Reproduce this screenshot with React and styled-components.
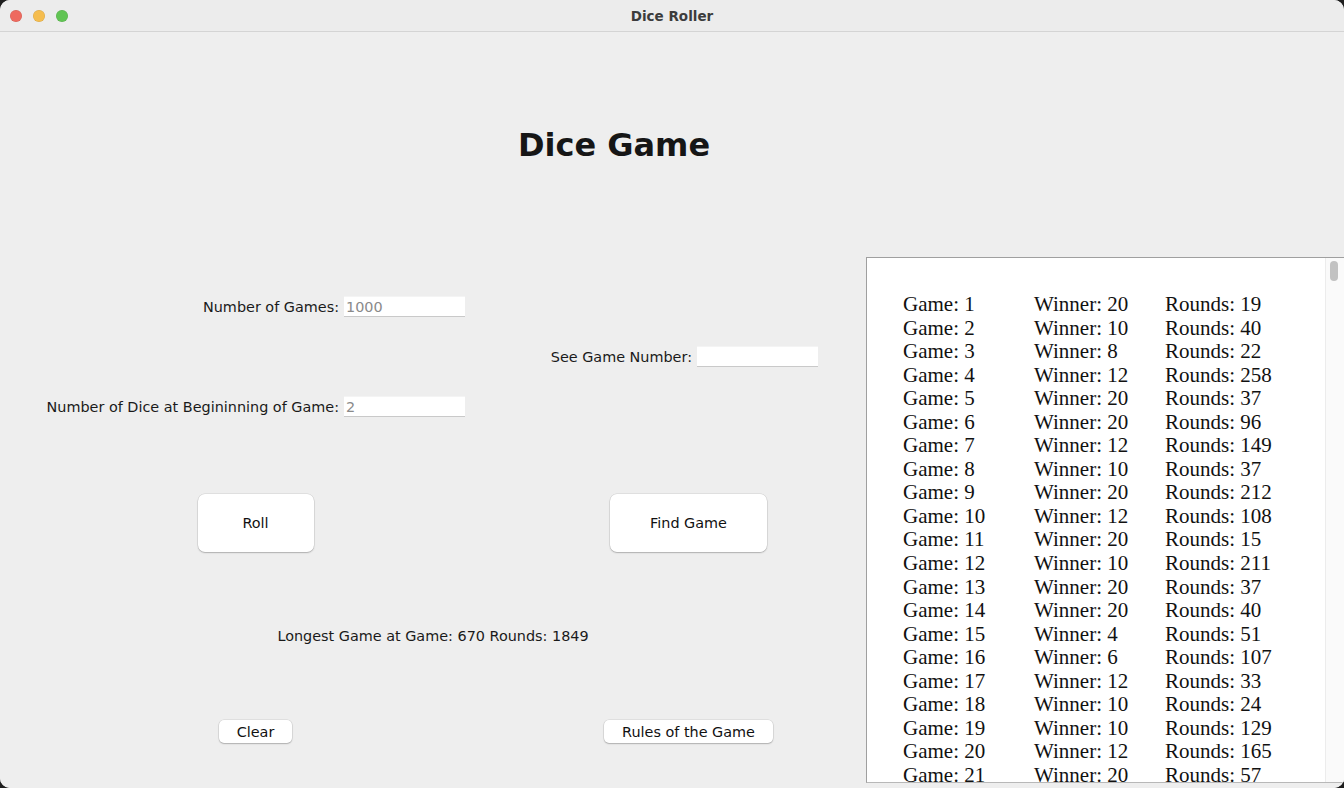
import React from "react";
import styled, { createGlobalStyle } from "styled-components";

const Global = createGlobalStyle`
  html, body { margin: 0; padding: 0; background: #1e1e1e; }
  body { width: 1344px; height: 788px; overflow: hidden; }
  * { box-sizing: border-box; }
`;

const Window = styled.div`
  width: 1344px;
  height: 788px;
  display: flex;
  flex-direction: column;
  background: #ececec;
  border-radius: 10px;
  overflow: hidden;
  font-family: "DejaVu Sans", "Liberation Sans", sans-serif;
  color: #1a1a1a;
`;

const TitleBar = styled.div`
  height: 32px;
  flex: none;
  display: flex;
  align-items: center;
  position: relative;
  background: #ececec;
  border-bottom: 1px solid #d4d4d4;
  padding-left: 10px;
  gap: 11px;
`;

const Light = styled.span`
  width: 12px;
  height: 12px;
  border-radius: 50%;
  background: ${(p) => p.$c};
  box-shadow: inset 0 0 0 0.5px rgba(0, 0, 0, 0.12);
`;

const WindowTitle = styled.div`
  position: absolute;
  left: 0;
  right: 0;
  top: 0;
  height: 31px;
  display: flex;
  align-items: center;
  justify-content: center;
  font-size: 13.5px;
  font-weight: bold;
  color: #3c3c3c;
  pointer-events: none;
`;

const Content = styled.div`
  flex: 1;
  display: grid;
  grid-template-columns: 866px 1fr;
  background: #eeeeee;
  min-height: 0;
`;

const LeftPane = styled.div`
  display: flex;
  flex-direction: column;
`;

const Title = styled.h1`
  margin: 93px 0 0;
  padding-left: 362px;
  height: 40px;
  line-height: 40px;
  text-align: center;
  font-size: 32px;
  font-weight: bold;
  color: #161616;
`;

const FieldRow = styled.div`
  margin-top: ${(p) => p.$top}px;
  display: grid;
  grid-template-columns: ${(p) => p.$labelEnd}px 121px;
  column-gap: 5px;
  height: 21px;
  align-items: center;
`;

const Label = styled.label`
  text-align: right;
  font-size: 14.4px;
  white-space: nowrap;
  color: #1a1a1a;
`;

const Input = styled.input`
  height: 21px;
  width: 121px;
  border: none;
  border-bottom: 1px solid #c9c9c9;
  border-top: 1px solid #f4f4f4;
  background: #fff;
  font-family: inherit;
  font-size: 14.4px;
  color: #7a7a7a;
  padding: 0 2px;
  outline: none;
  &::placeholder { color: #8a8a8a; }
`;

const ButtonRow = styled.div`
  margin-top: ${(p) => p.$top}px;
  display: grid;
  grid-template-columns: 511px 355px;
  justify-items: center;
  align-items: center;
`;

const Button = styled.button`
  width: ${(p) => p.$w}px;
  height: ${(p) => p.$h}px;
  background: #fff;
  border: none;
  border-radius: ${(p) => (p.$h > 30 ? 7 : 5)}px;
  box-shadow: 0 0 0 0.5px rgba(0, 0, 0, 0.12), 0 1px 1.5px rgba(0, 0, 0, 0.22);
  font-family: inherit;
  font-size: 14.4px;
  color: #111;
  padding: 0;
`;

const Info = styled.div`
  margin-top: 74px;
  height: 20px;
  line-height: 20px;
  text-align: center;
  font-size: 14.4px;
  color: #1a1a1a;
`;

const RightPane = styled.div`
  padding-top: 225px;
  padding-bottom: 5px;
  display: flex;
  min-height: 0;
`;

const ListPanel = styled.div`
  flex: 1;
  display: flex;
  background: #fff;
  border-top: 1px solid #9f9f9f;
  border-left: 1px solid #9f9f9f;
  border-bottom: 1px solid #b8b8b8;
  overflow: hidden;
`;

const List = styled.div`
  flex: 1;
  padding: 35px 0 0 36px;
  overflow: hidden;
  font-family: "Liberation Serif", "Times New Roman", serif;
  font-size: 21px;
  color: #111;
`;

const Row = styled.div`
  display: grid;
  grid-template-columns: 131px 131px 131px;
  height: 23.55px;
  line-height: 23.55px;
  white-space: nowrap;
`;

const ScrollTrack = styled.div`
  width: 19px;
  flex: none;
  background: #fafafa;
  border-left: 1px solid #ececec;
  display: flex;
  justify-content: center;
  padding-top: 3px;
`;

const Thumb = styled.div`
  width: 8px;
  height: 20px;
  border-radius: 4px;
  background: #c2c2c2;
  margin-right: 3px;
`;

const games = [
  [1, 20, 19], [2, 10, 40], [3, 8, 22], [4, 12, 258], [5, 20, 37],
  [6, 20, 96], [7, 12, 149], [8, 10, 37], [9, 20, 212], [10, 12, 108],
  [11, 20, 15], [12, 10, 211], [13, 20, 37], [14, 20, 40], [15, 4, 51],
  [16, 6, 107], [17, 12, 33], [18, 10, 24], [19, 10, 129], [20, 12, 165],
  [21, 20, 57],
];

export default function App() {
  return (
    <>
      <Global />
      <Window>
        <TitleBar>
          <Light $c="#ee6a5f" />
          <Light $c="#f5bd4f" />
          <Light $c="#61c454" />
          <WindowTitle>Dice Roller</WindowTitle>
        </TitleBar>
        <Content>
          <LeftPane>
            <Title>Dice Game</Title>
            <FieldRow $top={131} $labelEnd={339}>
              <Label>Number of Games:</Label>
              <Input placeholder="1000" />
            </FieldRow>
            <FieldRow $top={29} $labelEnd={692}>
              <Label>See Game Number:</Label>
              <Input />
            </FieldRow>
            <FieldRow $top={29} $labelEnd={339}>
              <Label>Number of Dice at Begininning of Game:</Label>
              <Input placeholder="2" />
            </FieldRow>
            <ButtonRow $top={77}>
              <Button $w={116} $h={58}>Roll</Button>
              <Button $w={157} $h={58}>Find Game</Button>
            </ButtonRow>
            <Info>Longest Game at Game: 670 Rounds: 1849</Info>
            <ButtonRow $top={74}>
              <Button $w={73} $h={23}>Clear</Button>
              <Button $w={169} $h={23}>Rules of the Game</Button>
            </ButtonRow>
          </LeftPane>
          <RightPane>
            <ListPanel>
              <List>
                {games.map(([g, w, r]) => (
                  <Row key={g}>
                    <span>Game: {g}</span>
                    <span>Winner: {w}</span>
                    <span>Rounds: {r}</span>
                  </Row>
                ))}
              </List>
              <ScrollTrack>
                <Thumb />
              </ScrollTrack>
            </ListPanel>
          </RightPane>
        </Content>
      </Window>
    </>
  );
}
